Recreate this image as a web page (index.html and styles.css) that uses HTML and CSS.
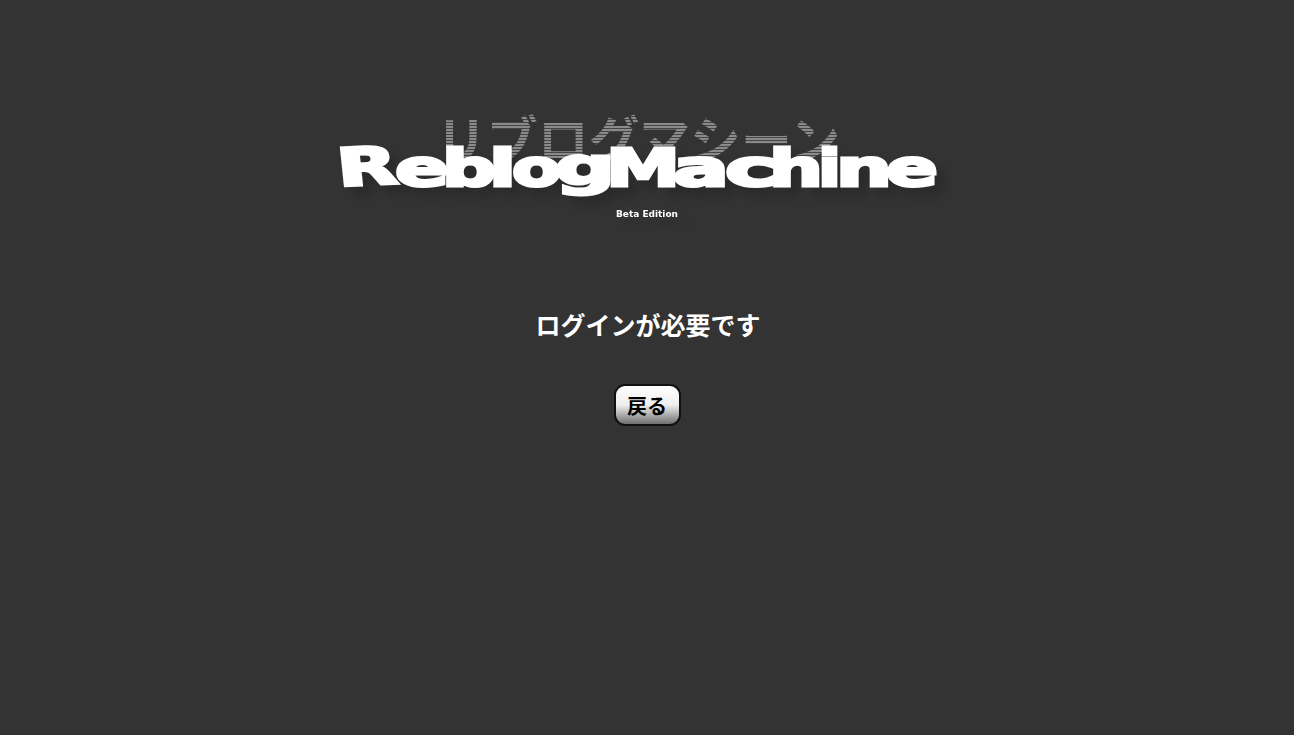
FILE: index.html
```html
<!DOCTYPE html>
<html lang="ja">
  <head>
    <meta charset="UTF-8" />
    <title>ReblogMachine</title>
    <link rel="stylesheet" href="styles.css">
  </head>
  <body>
    <div id="wrap">
      <svg class="logo" width="640" height="140" viewBox="327 100 640 140" role="img" aria-label="ReblogMachine">
        <defs>
          <pattern id="stripes" width="4" height="3" patternUnits="userSpaceOnUse">
            <rect width="4" height="3" fill="#444" />
            <rect width="4" height="2" fill="#8a8a8a" />
          </pattern>
        </defs>
        <text class="logo_kana" x="436" y="160" fill="url(#stripes)" textLength="404" lengthAdjust="spacingAndGlyphs">リブログマシーン</text>
        <g class="logo_shadow">
          <text class="logo_name" y="186">
            <tspan x="339" rotate="-4" textLength="60" lengthAdjust="spacingAndGlyphs">R</tspan>
            <tspan x="395" y="186" textLength="54" lengthAdjust="spacingAndGlyphs">e</tspan>
            <tspan x="442" y="186" textLength="54" lengthAdjust="spacingAndGlyphs">b</tspan>
            <tspan x="489" y="186" textLength="27" lengthAdjust="spacingAndGlyphs">l</tspan>
            <tspan x="512" y="186" textLength="49" lengthAdjust="spacingAndGlyphs">o</tspan>
            <tspan x="555" y="184" textLength="60" lengthAdjust="spacingAndGlyphs">g</tspan>
            <tspan x="606" y="186" textLength="74" lengthAdjust="spacingAndGlyphs">M</tspan>
            <tspan x="673" y="186" textLength="56" lengthAdjust="spacingAndGlyphs">a</tspan>
            <tspan x="725" y="186" textLength="52" lengthAdjust="spacingAndGlyphs">c</tspan>
            <tspan x="769" y="186" textLength="54" lengthAdjust="spacingAndGlyphs">h</tspan>
            <tspan x="818" y="186" textLength="23" lengthAdjust="spacingAndGlyphs">i</tspan>
            <tspan x="836" y="186" textLength="56" lengthAdjust="spacingAndGlyphs">n</tspan>
            <tspan x="886" y="186" textLength="52" lengthAdjust="spacingAndGlyphs">e</tspan>
          </text>
          <text class="logo_edition" x="616" y="217" textLength="62" lengthAdjust="spacingAndGlyphs">Beta Edition</text>
        </g>
      </svg>
      <h1 class="message">ログインが必要です</h1>
      <button type="button" class="button_back">戻る</button>
    </div>
  </body>
</html>
```

FILE: styles.css
```css
* {
  margin: 0;
  padding: 0;
}

body {
  background-color: #333;
  color: #fff;
  font-family: "Liberation Sans", "Noto Sans CJK JP", sans-serif;
}

#wrap {
  display: flex;
  flex-direction: column;
  align-items: center;
  padding-top: 100px;
}

.logo {
  display: block;
}

.logo_kana {
  font-family: "Noto Sans CJK JP", sans-serif;
  font-weight: 700;
  font-size: 52px;
}

.logo_shadow {
  filter: drop-shadow(9px 9px 4px rgba(0, 0, 0, 0.16));
}

.logo_name {
  font-family: "DejaVu Sans", sans-serif;
  font-weight: bold;
  font-size: 52px;
  fill: #fff;
  stroke: #fff;
  stroke-width: 3px;
  stroke-linejoin: miter;
}

.logo_edition {
  font-family: "DejaVu Sans", sans-serif;
  font-weight: bold;
  font-size: 9px;
  fill: #fff;
}

.message {
  margin-top: 70px;
  padding-left: 2px;
  font-size: 25px;
  line-height: 32px;
  font-weight: bold;
}

.button_back {
  margin-top: 42px;
  width: 67px;
  height: 42px;
  border: 2px solid #111;
  border-radius: 11px;
  background: linear-gradient(to bottom, #fff 0%, #eee 50%, #6f6f6f 100%);
  color: #000;
  font-family: "Liberation Sans", "Noto Sans CJK JP", sans-serif;
  font-size: 20px;
  font-weight: bold;
}
```
